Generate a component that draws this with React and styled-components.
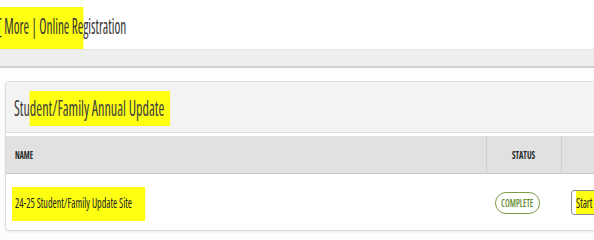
import React from 'react';
import styled, {createGlobalStyle, css} from 'styled-components';

const GlobalStyle = createGlobalStyle`
  html, body {
    margin: 0;
    padding: 0;
    background: #fdfdfd;
    overflow: hidden;
  }
  body {
    font-family: "Open Sans", "Roboto Condensed", "Liberation Sans", sans-serif;
  }
`;

// the screenshot is squeezed sideways, so the text gets the same squeeze
const squeezed = css`
  display: inline-block;
  font-family: "Open Sans", "Roboto Condensed", "Liberation Sans", sans-serif;
  font-stretch: 75%;
  white-space: nowrap;
  transform: scaleX(${p => p.$scale || 0.7});
  transform-origin: ${p => p.$origin || 'left'} center;
`;

const Page = styled.div`
  width: 594px;
  height: 239px;
  overflow: hidden;
`;

const TopBar = styled.div`
  height: 49px;
  background: #ffffff;
  display: flex;
  align-items: center;
`;

const PageTitle = styled.div`
  ${squeezed}
  font-size: 21px;
  color: #333333;
  margin-left: -6px;
  padding-top: 3px;
`;

const Highlight = styled.span`
  background: #ffff14;
  padding: ${p => p.$pad || '3px 0'};
`;

const Band = styled.div`
  height: 16px;
  background: #eeeeee;
  border-top: 1px solid #e6e6e6;
  border-bottom: 2px solid #cfcfcf;
`;

const Content = styled.div`
  padding: 13px 0 0 5px;
`;

const Card = styled.div`
  width: 661px;
  background: #ffffff;
  border: 1px solid #dcdcdc;
  border-radius: 4px;
  box-shadow: 0 1px 3px rgba(0, 0, 0, 0.08);
  overflow: hidden;
`;

const CardHeader = styled.div`
  height: 51px;
  box-sizing: border-box;
  background: #f3f3f3;
  border-bottom: 1px solid #dcdcdc;
  display: flex;
  align-items: center;
  padding-left: 8px;
  padding-top: 1px;
`;

const CardTitle = styled.div`
  ${squeezed}
  font-size: 21px;
  color: #404040;
`;

const CardBody = styled.div`
  padding-top: 3px;
`;

const Table = styled.div`
  display: grid;
  grid-template-columns: 480px 75px 104px;
`;

const HeadCell = styled.div`
  height: 38px;
  box-sizing: border-box;
  background: #e1e1e1;
  border-bottom: 1px solid #c6c6c6;
  border-left: ${p => p.$first ? 'none' : '1px solid #cfcfcf'};
  display: flex;
  align-items: center;
  justify-content: ${p => p.$first ? 'flex-start' : 'center'};
  padding-left: ${p => p.$first ? '9px' : '0'};
  overflow: hidden;
`;

const HeadLabel = styled.span`
  ${squeezed}
  font-size: 11px;
  font-weight: 700;
  color: #2a2a2a;
  text-transform: uppercase;
`;

const BodyCell = styled.div`
  height: 56px;
  display: flex;
  align-items: center;
  justify-content: ${p => p.$align || 'flex-start'};
  padding-left: ${p => p.$padLeft || '0'};
  padding-right: ${p => p.$padRight || '0'};
  padding-top: 1px;
  box-sizing: border-box;
  overflow: hidden;
`;

const NameText = styled.span`
  ${squeezed}
  font-size: 14px;
  color: #222222;
`;

const StatusBadge = styled.span`
  display: inline-flex;
  align-items: center;
  justify-content: center;
  width: 45px;
  height: 22px;
  box-sizing: border-box;
  border: 1.5px solid #7c9b45;
  border-radius: 11px;
`;

const BadgeText = styled.span`
  ${squeezed}
  font-size: 11px;
  font-weight: 600;
  color: #5f8a2c;
`;

const ActionButton = styled.button`
  height: 25px;
  width: 90px;
  padding: 0 4px;
  border: 1px solid #8e8e8e;
  border-radius: 3px;
  background: #ffffff;
  display: flex;
  align-items: center;
  overflow: hidden;
`;

const ButtonText = styled.span`
  ${squeezed}
  font-size: 14px;
  color: #222222;
`;

export default function App() {
   return <Page>
      <GlobalStyle/>
      <TopBar>
         <PageTitle $scale={0.63}>
            <Highlight $pad="5px 0 9px 6px">[ More | Online Re</Highlight>gistration
         </PageTitle>
      </TopBar>
      <Band/>
      <Content>
         <Card>
            <CardHeader>
               <CardTitle $scale={0.676}>
                  Stu<Highlight $pad="3px 9px 4px 0">dent/Family Annual Update</Highlight>
               </CardTitle>
            </CardHeader>
            <CardBody>
               <Table>
                  <HeadCell $first><HeadLabel>Name</HeadLabel></HeadCell>
                  <HeadCell><HeadLabel $origin="center" $scale={0.75}>Status</HeadLabel></HeadCell>
                  <HeadCell><HeadLabel $origin="center" $scale={0.75}>Action</HeadLabel></HeadCell>
                  <BodyCell $padLeft="6px">
                     <NameText $scale={0.72}>
                        <Highlight $pad="6px 18px 9px 4px">24-25 Student/Family Update Site</Highlight>
                     </NameText>
                  </BodyCell>
                  <BodyCell $align="center" $padRight="12px">
                     <StatusBadge>
                        <BadgeText $origin="center" $scale={0.76}>COMPLETE</BadgeText>
                     </StatusBadge>
                  </BodyCell>
                  <BodyCell $padLeft="10px">
                     <ActionButton>
                        <ButtonText $scale={0.72}>
                           <Highlight $pad="3px 10px 3px 0">Start Update</Highlight>
                        </ButtonText>
                     </ActionButton>
                  </BodyCell>
               </Table>
            </CardBody>
         </Card>
      </Content>
   </Page>
}
